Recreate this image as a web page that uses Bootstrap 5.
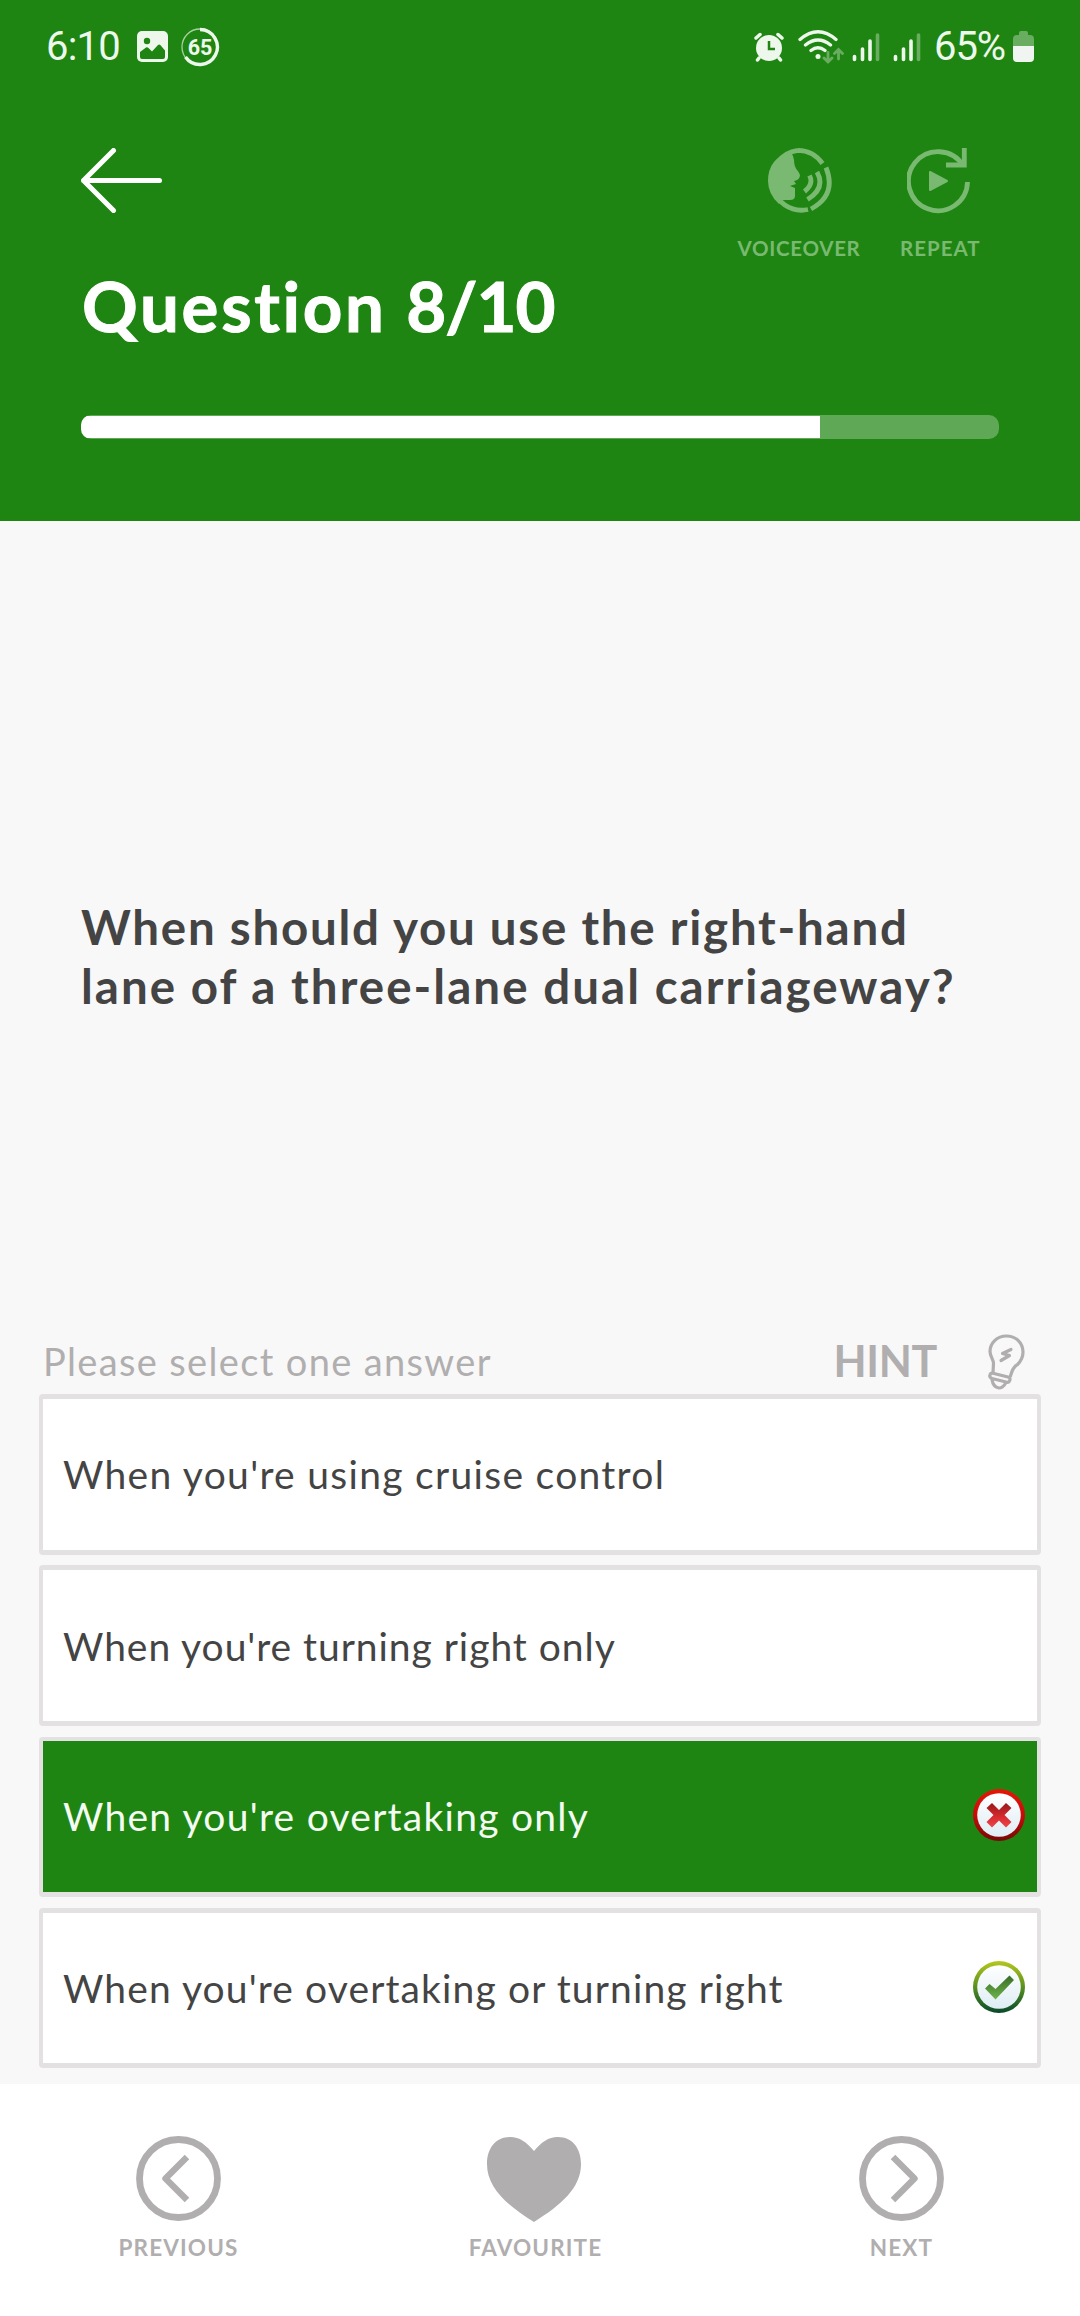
<!DOCTYPE html>
<html lang="en">
<head>
<meta charset="utf-8">
<meta name="viewport" content="width=device-width, initial-scale=1">
<title>Question 8/10</title>
<link href="https://cdn.jsdelivr.net/npm/bootstrap@5.3.0/dist/css/bootstrap.min.css" rel="stylesheet">
<style>
:root { --brand:#1f8512; --muted:#b0aeaf; --ink:#444; }
body { font-family: Lato, "Open Sans", sans-serif; background:#f8f8f8; color:var(--ink); }
svg { display:block; flex:none; }
.screen { width:1080px; height:2316px; overflow:hidden; }
.quiz-head { background:var(--brand); height:521px; }
.statusbar { height:93px; padding:0 46px 0 46px; font:400 40px/1 Roboto, sans-serif; color:#edf7ec; }
.clock { letter-spacing:-.8px; width:74px; }
.status-gap { margin-left:13px; }
.battery-level { margin-left:13px; letter-spacing:-1.1px; }
.head-tools { height:177px; padding:55px 100px 0 81px; }
.tool { color:#79b971; font-size:20.5px; font-weight:700; line-height:24px; text-align:center; letter-spacing:.7px; white-space:nowrap; }
.tool svg { margin:0 auto 22px; }
.tool-voice { width:124px; }
.tool-repeat { width:80px; margin-left:39px; letter-spacing:1px; }
.quiz-title { font-size:69px; line-height:72px; font-weight:700; margin:0 0 73px 82px; letter-spacing:2.7px; white-space:nowrap; -webkit-text-stroke:1px #fff; }
.quiz-title .count { letter-spacing:-1px; }
.quiz-progress { height:24px; margin:0 81px; padding:1px 0; border-radius:10px; background:#5ea856; }
.quiz-progress .progress-bar { background:#fff; }
.question { padding:376px 81px 0; height:809px; font-size:47.5px; line-height:59px; font-weight:700; white-space:nowrap; letter-spacing:1.75px; }
.question .line-two { letter-spacing:2.05px; }
.prompt-row { height:64px; padding:0 55px 0 43px; color:var(--muted); }
.prompt { font-size:38px; line-height:60px; padding-bottom:2px; letter-spacing:1.35px; }
.hint { font-size:43px; line-height:60px; font-weight:700; padding-bottom:2px; margin-right:51px; letter-spacing:-.3px; }
.answers { padding:0 39px; gap:10.75px; }
.answer { height:160.5px; border:solid #e4e1e2; border-width:5px 4px; border-radius:4px; background:#fff; padding:0 12px 0 20px; font-size:39px; line-height:48px; letter-spacing:1.3px; }
.answer:nth-child(2) { letter-spacing:.95px; }
.answer:nth-child(3) { letter-spacing:1.25px; }
.answer:nth-child(4) { letter-spacing:1.12px; }
.answer.chosen { background:var(--brand); color:#f4fbf3; border-width:4px 4px 5px; }
.answer svg { margin-top:-3px; }
.quiz-foot { height:232px; margin-top:15.5px; background:#fff; color:var(--muted); padding-top:52px; }
.foot-item { width:357px; font-size:22.5px; line-height:28px; font-weight:700; letter-spacing:1.15px; }
.foot-item svg { margin-bottom:12px; }
.foot-item.last { width:366px; padding-left:9px; }
.heart { margin-right:3px; }
</style>
<script src="https://cdn.jsdelivr.net/npm/bootstrap@5.3.0/dist/js/bootstrap.bundle.min.js"></script>
</head>
<body>
<div class="screen d-flex flex-column">
  <header class="quiz-head flex-shrink-0">
    <div class="statusbar d-flex align-items-center">
      <span class="clock">6:10</span>
      <svg width="31" height="31" viewBox="0 0 31 31" style="margin-left:17px"><rect width="31" height="31" rx="5" fill="#edf7ec"/><circle cx="10" cy="10" r="3.2" fill="#1f8512"/><path d="M3 21l6-4.5q1.3-.7 2.5.5l3.500 3.500 6-6.500q1.200-1 2.300 0l4.700 5.500v6.500q0 2-2 2h-21q-2 0-2-2z" fill="#1f8512"/></svg>
      <svg width="40" height="40" viewBox="0 0 40 40" style="margin-left:12px"><circle cx="20" cy="20" r="18" fill="none" stroke="#a5d19f" stroke-width="1.300"/><path d="M20 2.500A17.500 17.500 0 1 1 5.500 30" fill="none" stroke="#edf7ec" stroke-width="3.400"/><text x="20" y="27.500" text-anchor="middle" font-family="Roboto" font-weight="700" font-size="21.500" fill="#edf7ec">65</text></svg>
      <svg class="ms-auto" width="30" height="30" viewBox="0 0 30 30" fill="none" stroke="#edf7ec" stroke-width="3.500" stroke-linecap="round"><circle cx="15" cy="16" r="13" fill="#edf7ec" stroke="none"/><path d="M2 6l4-3.500M28 6l-4-3.500M5 26l-1.500 2M25 26l1.500 2"/><path d="M15 9v8h6" stroke="#1f8512" stroke-width="2.500" stroke-linecap="butt"/></svg>
      <svg width="46" height="34" viewBox="0 0 46 34" fill="none" stroke="#edf7ec" stroke-width="3.300" stroke-linecap="round" style="margin-left:14px"><path d="M2 9.500Q20 -6 38 9.500M7.500 15Q20 5 32.500 15M13 20.500Q20 15 27 20.500"/><circle cx="20" cy="26.500" r="2.500" fill="#edf7ec" stroke="none"/><path d="M30 22.500v9.500M26 28l4 4 4-4M40.500 29V19.500M36.500 23.500l4-4 4 4" stroke="#69ad60" stroke-width="2.800"/></svg>
      <svg width="28" height="30" viewBox="0 0 28 30" stroke="#edf7ec" stroke-width="3.600" stroke-linecap="round" style="margin-left:8px"><path d="M2.500 24.500v3M10.500 17v10.500M18 9v18.500"/><path d="M25.500 3v24.500" stroke="#69ad60"/></svg>
      <svg class="status-gap" width="28" height="30" viewBox="0 0 28 30" stroke="#edf7ec" stroke-width="3.600" stroke-linecap="round"><path d="M2.500 24.500v3M10.500 17v10.500M18 9v18.500"/><path d="M25.500 3v24.500" stroke="#69ad60"/></svg>
      <span class="battery-level">65%</span>
      <svg width="21" height="31" viewBox="0 0 21 31" style="margin-left:8px"><path d="M6 2q0-2 2-2h5q2 0 2 2v2h2q4 0 4 4v7H0V8q0-4 4-4h2z" fill="#69ad60"/><path d="M0 15h21v12q0 4-4 4H4q-4 0-4-4z" fill="#f1f5f1"/></svg>
    </div>
    <div class="head-tools d-flex align-items-start">
      <svg width="81" height="65" viewBox="0 0 81 65" fill="none" stroke="#fff" stroke-width="5" stroke-linecap="round" stroke-linejoin="round"><path d="M32.500 2.500L2.500 32.500l30 30M2.500 32.500h76"/></svg>
      <div class="tool tool-voice ms-auto">
        <svg width="66" height="66" viewBox="0 0 66 66" fill="none" stroke="#79b971" stroke-width="4.800"><path d="M32 2.400A30 30 0 1 0 42 61.500M32 2.400Q47 2.500 56.500 15.500"/><path d="M25 4Q2 10 2 33Q2 46 13 56L15 52H24Q29 52 29 48V40L24 38L30 36L28 33Q34 32 34 27Q33 24 31 22Q28 18 28 12Q27 7 25 4Z" fill="#79b971" stroke="none"/><path d="M43.500 27.500Q48 36 38.500 43.500M51 24Q60 40 41.500 51.500M60 19.500Q71 47 45 61"/></svg>
        <span>VOICEOVER</span>
      </div>
      <div class="tool tool-repeat">
        <svg width="66" height="66" viewBox="0 0 66 66" fill="none" stroke="#79b971" stroke-width="4.800"><path d="M60.500 34A29.500 29.500 0 1 1 56 17.500"/><path d="M57.300 0V17H39"/><path d="M23 24v18l17-9z" fill="#79b971" stroke-width="2" stroke-linejoin="round"/></svg>
        <span>REPEAT</span>
      </div>
    </div>
    <h1 class="quiz-title text-white">Question <span class="count">8/10</span></h1>
    <div class="quiz-progress progress" role="progressbar" aria-valuenow="80" aria-valuemin="0" aria-valuemax="100"><div class="progress-bar" style="width:80.500%"></div></div>
  </header>

  <main class="d-flex flex-column">
    <div class="question">When should you use the right-hand<br><span class="line-two">lane of a three-lane dual carriageway?</span></div>
    <div class="prompt-row d-flex align-items-center">
      <span class="prompt">Please select one answer</span>
      <span class="hint ms-auto">HINT</span>
      <svg width="37" height="56" viewBox="0 0 37 56" fill="none" stroke="#b0aeaf" stroke-width="3.200" stroke-linecap="round" stroke-linejoin="round"><path d="M5 39L5.500 29C5.500 26 2 22 2 17.500C2 9 9 2 18.500 2C28 2 35 9 35 18C35 24 32 28 29.500 30.500C25 33 24 37 22.500 42"/><path d="M4 39L20 43Q23 44 21.500 47Q20.500 49 18 48L4 44.500Q1 43 2 41Q2.500 39 4 39ZM4 45.500Q5 53 11 54Q15 54 18 48.500"/><path d="M23 15.500L14.500 19.500L21.500 21.500L13 26.500"/></svg>
    </div>
    <div class="answers d-flex flex-column">
      <div class="answer d-flex align-items-center"><span>When you're using cruise control</span></div>
      <div class="answer d-flex align-items-center"><span>When you're turning right only</span></div>
      <div class="answer chosen d-flex align-items-center"><span>When you're overtaking only</span>
        <svg class="ms-auto" width="52" height="54" viewBox="0 0 52 54"><defs><linearGradient id="red" x2="0" y2="1"><stop stop-color="#e61508"/><stop offset=".5" stop-color="#c70c09"/><stop offset="1" stop-color="#740806"/></linearGradient><linearGradient id="cross" x2="0" y2="1"><stop stop-color="#97191b"/><stop offset=".55" stop-color="#d5292e"/><stop offset="1" stop-color="#ed484c"/></linearGradient><linearGradient id="disc" x2="0" y2="1"><stop stop-color="#fff"/><stop offset="1" stop-color="#dfedf5"/></linearGradient></defs><circle cx="26" cy="27" r="26" fill="url(#red)"/><circle cx="26" cy="27" r="21.800" fill="url(#disc)"/><path d="M19 15l7 7 7-7 5.500 5-7 7 7 7-5.500 5.500-7-7-7 7-5.500-5.500 7-7-7-7z" fill="url(#cross)"/></svg></div>
      <div class="answer d-flex align-items-center"><span>When you're overtaking or turning right</span>
        <svg class="ms-auto" width="52" height="54" viewBox="0 0 52 54"><defs><linearGradient id="ring" x2="0" y2="1"><stop stop-color="#b5c81f"/><stop offset=".5" stop-color="#58901f"/><stop offset="1" stop-color="#07482a"/></linearGradient><linearGradient id="tick" x2="0" y2="1"><stop stop-color="#376d26"/><stop offset="1" stop-color="#70b44c"/></linearGradient></defs><circle cx="26" cy="27" r="26" fill="url(#ring)"/><circle cx="26" cy="27" r="21.800" fill="url(#disc)"/><path d="M12 28.500l4.500-4.500 6 5L36.500 15.500l4.500 4.500L22.500 39.500z" fill="url(#tick)"/></svg></div>
    </div>
  </main>

  <nav class="quiz-foot d-flex flex-shrink-0">
    <div class="foot-item d-flex flex-column align-items-center"><svg width="85" height="86" viewBox="0 0 85 86" fill="none" stroke="#b0aeaf"><circle cx="42.500" cy="42.500" r="39" stroke-width="6.800"/><path d="M51 21L29.500 42.500 51 64" stroke-width="6.400" stroke-linejoin="round"/></svg><span>PREVIOUS</span></div>
    <div class="foot-item d-flex flex-column align-items-center"><svg class="heart" width="94" height="86" viewBox="0 0 94 86" fill="#b0aeaf"><path d="M47 15C39 6 33 1 23 1C9 1 0 12 0 28C0 52 20 69 47 86C74 69 94 52 94 28C94 12 85 1 71 1C61 1 55 6 47 15Z"/></svg><span>FAVOURITE</span></div>
    <div class="foot-item last d-flex flex-column align-items-center"><svg width="85" height="86" viewBox="0 0 85 86" fill="none" stroke="#b0aeaf"><circle cx="42.500" cy="42.500" r="39" stroke-width="6.800"/><path d="M34 21l21.500 21.500L34 64" stroke-width="6.400" stroke-linejoin="round"/></svg><span>NEXT</span></div>
  </nav>
</div>
</body>
</html>
